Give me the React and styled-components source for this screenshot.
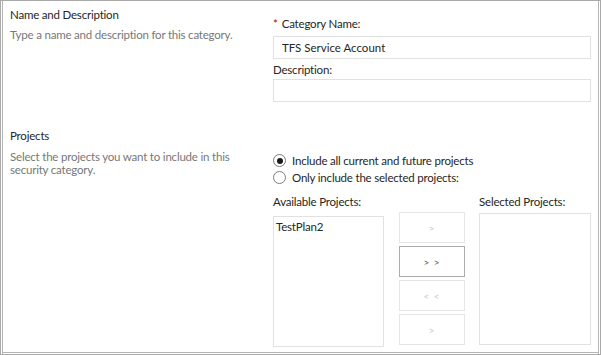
import React, { useState } from 'react';
import styled, { createGlobalStyle } from 'styled-components';

const GlobalStyle = createGlobalStyle`
  html, body {
    margin: 0;
    padding: 0;
    background: #ffffff;
  }
  body {
    font-family: Lato, "Open Sans", sans-serif;
    font-size: 11.5px;
    letter-spacing: -0.2px;
    color: #262626;
  }
`;

const Frame = styled.div`
  width: 601px;
  height: 355px;
  box-sizing: border-box;
  border: 1px solid #a9a9a9;
  box-shadow: inset 1px 0 0 #ffffff, inset 2px 0 0 #b4b4b4, inset -1px 0 0 #ffffff,
    inset -2px 0 0 #b4b4b4, inset 0 -1px 0 #ffffff, inset 0 -2px 0 #b4b4b4;
  overflow: hidden;
  background: #fff;
`;

const Section = styled.section`
  display: grid;
  grid-template-columns: 272px 1fr;
  margin-top: ${(p) => p.$top}px;
`;

const Info = styled.div`
  padding-left: 9px;
`;

const Heading = styled.h2`
  margin: 0 0 ${(p) => p.$gap}px;
  font-size: 11.5px;
  font-weight: 400;
  color: #262626;
  line-height: 14px;
`;

const Hint = styled.p`
  margin: 0;
  color: #777777;
  line-height: 13px;
  width: 240px;
`;

const Fields = styled.div`
  display: flex;
  flex-direction: column;
  padding-right: 9px;
`;

const Label = styled.label`
  display: block;
  line-height: 14px;
  margin-top: ${(p) => p.$top || 0}px;
  margin-bottom: ${(p) => p.$gap || 0}px;
`;

const Req = styled.span`
  color: #bf0000;
  margin-right: 4px;
`;

const TextBox = styled.input`
  box-sizing: border-box;
  height: 23px;
  width: 100%;
  border: 1px solid #e1e1e1;
  padding: 0 8px;
  font: inherit;
  color: #262626;
  outline: none;
`;

const RadioGroup = styled.div`
  margin-top: 23px;
`;

const RadioRow = styled.label`
  display: flex;
  align-items: center;
  gap: 6px;
  height: 17px;
`;

const RadioDot = styled.span`
  box-sizing: border-box;
  width: 13px;
  height: 13px;
  border: 1px solid #7d7d7d;
  border-radius: 50%;
  display: flex;
  align-items: center;
  justify-content: center;
  background: #fff;
  &::after {
    content: '';
    width: 6px;
    height: 6px;
    border-radius: 50%;
    background: ${(p) => (p.$on ? '#1a1a1a' : 'transparent')};
  }
`;

const Picker = styled.div`
  display: grid;
  grid-template-columns: 111px 1fr 112px;
  margin-top: 9px;
`;

const ListCol = styled.div`
  display: flex;
  flex-direction: column;
`;

const ListBox = styled.div`
  box-sizing: border-box;
  height: ${(p) => p.$h}px;
  margin-top: ${(p) => p.$mt}px;
  border: 1px solid #e1e1e1;
  padding: 3px 2px;
  line-height: 14px;
`;

const Buttons = styled.div`
  display: flex;
  flex-direction: column;
  align-items: center;
  gap: 3px;
  padding-top: 17px;
`;

const MoveButton = styled.button`
  box-sizing: border-box;
  width: 66px;
  height: 31px;
  background: #fff;
  border: 1px solid ${(p) => (p.$active ? '#ababab' : '#e6e6e6')};
  color: ${(p) => (p.$active ? '#555' : '#c8c8c8')};
  font-family: inherit;
  font-size: 10px;
  word-spacing: 2px;
  padding: 0;
  cursor: default;
`;

const App = () => {
  const [scope, setScope] = useState('all');

  return (
    <>
      <GlobalStyle />
      <Frame>
        <Section $top={7}>
          <Info>
            <Heading $gap={6}>Name and Description</Heading>
            <Hint>Type a name and description for this category.</Hint>
          </Info>
          <Fields>
            <Label $top={9} $gap={5}>
              <Req>*</Req>Category Name:
            </Label>
            <TextBox defaultValue="TFS Service Account" />
            <Label $top={4} $gap={2}>Description:</Label>
            <TextBox />
          </Fields>
        </Section>
        <Section $top={27}>
          <Info>
            <Heading $gap={7}>Projects</Heading>
            <Hint>Select the projects you want to include in this security category.</Hint>
          </Info>
          <Fields>
            <RadioGroup>
              <RadioRow onClick={() => setScope('all')}>
                <RadioDot $on={scope === 'all'} />
                Include all current and future projects
              </RadioRow>
              <RadioRow onClick={() => setScope('some')}>
                <RadioDot $on={scope === 'some'} />
                Only include the selected projects:
              </RadioRow>
            </RadioGroup>
            <Picker>
              <ListCol>
                <Label>Available Projects:</Label>
                <ListBox $h={131} $mt={7}>TestPlan2</ListBox>
              </ListCol>
              <Buttons>
                <MoveButton>&gt;</MoveButton>
                <MoveButton $active>&gt; &gt;</MoveButton>
                <MoveButton>&lt; &lt;</MoveButton>
                <MoveButton>&gt;</MoveButton>
              </Buttons>
              <ListCol>
                <Label>Selected Projects:</Label>
                <ListBox $h={132} $mt={4}></ListBox>
              </ListCol>
            </Picker>
          </Fields>
        </Section>
      </Frame>
    </>
  );
};

export default App;
